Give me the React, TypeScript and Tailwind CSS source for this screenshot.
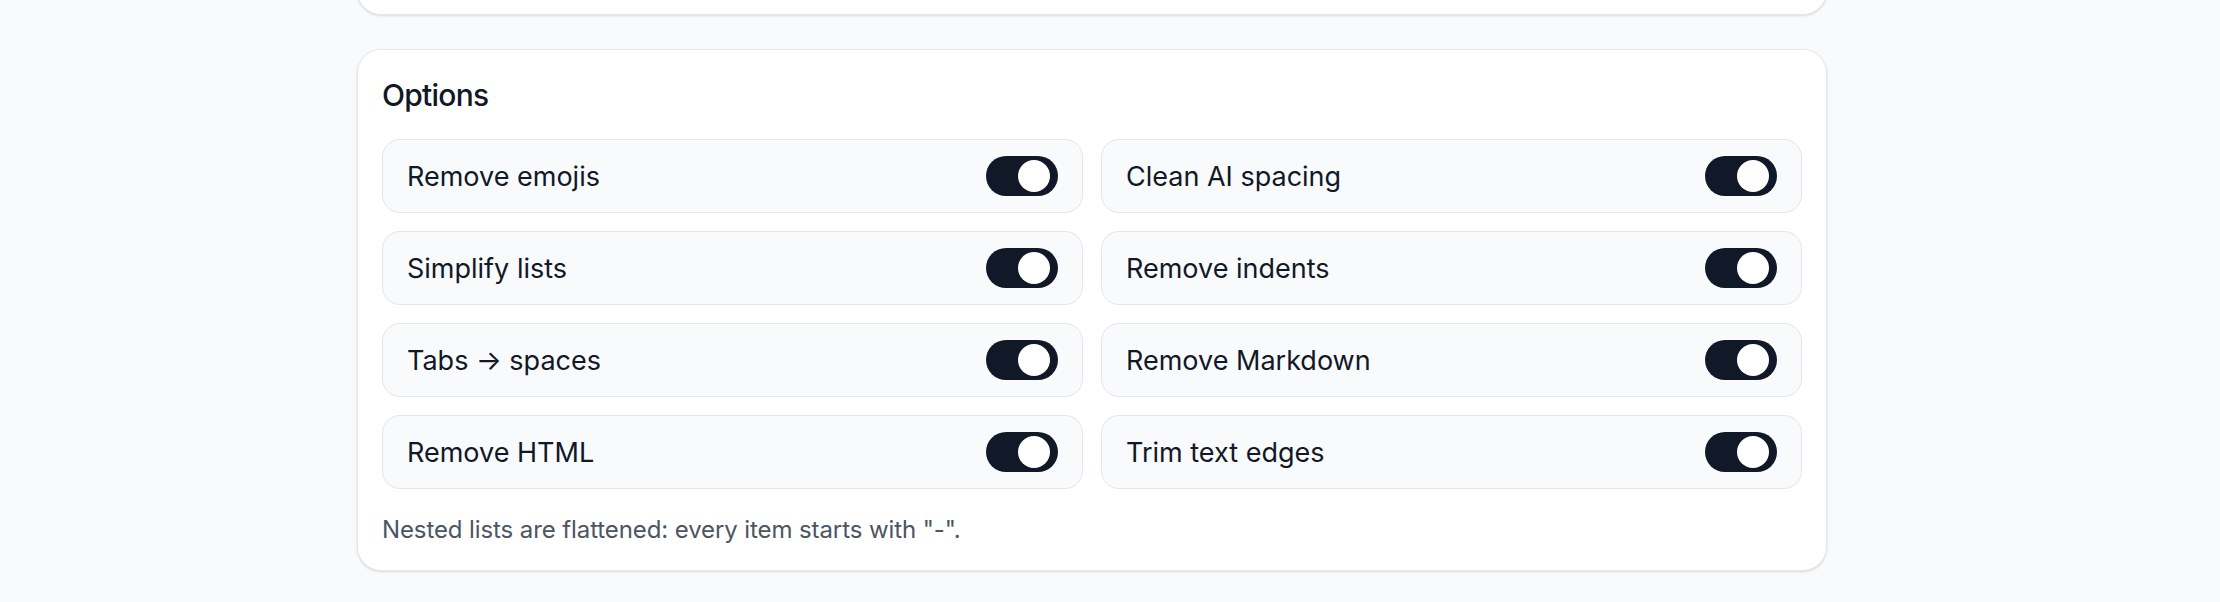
const options = [
  'Remove emojis',
  'Clean AI spacing',
  'Simplify lists',
  'Remove indents',
  'Tabs → spaces',
  'Remove Markdown',
  'Remove HTML',
  'Trim text edges',
];

function Toggle() {
  return (
    <div className="flex h-[40px] w-[72px] shrink-0 items-center rounded-full bg-[#111827] pl-[32px]">
      <div className="size-[32px] rounded-full bg-white" />
    </div>
  );
}

export default function App() {
  return (
    <div className="h-[602px] overflow-hidden bg-[#f9fafb] font-['Inter',sans-serif] text-[#111827]">
      <div className="ml-[357px] w-[1470px]">
        {/* previous card, mostly scrolled off */}
        <div className="-mt-[100px] h-[115px] rounded-[24px] border border-[#e5e7eb] bg-white shadow-sm" />

        {/* Options */}
        <section className="mt-[34px] rounded-[24px] border border-[#e5e7eb] bg-white p-[24px] shadow-sm">
          <h2 className="text-[30px] leading-[42px] font-medium tracking-[-0.025em]">Options</h2>
          <div className="mt-[23px] grid grid-cols-2 gap-[18px]">
            {options.map((label) => (
              <div
                key={label}
                className="flex h-[74px] items-center justify-between rounded-[18px] border border-[#e3e5ea] bg-[#f9fafb] px-[24px]"
              >
                <span className="text-[27px] leading-none">{label}</span>
                <Toggle />
              </div>
            ))}
          </div>
          <p className="mt-[25px] text-[24px] leading-[32px] tracking-[-0.1px] text-[#4b5563]">
            Nested lists are flattened: every item starts with "-".
          </p>
        </section>
      </div>
    </div>
  );
}
